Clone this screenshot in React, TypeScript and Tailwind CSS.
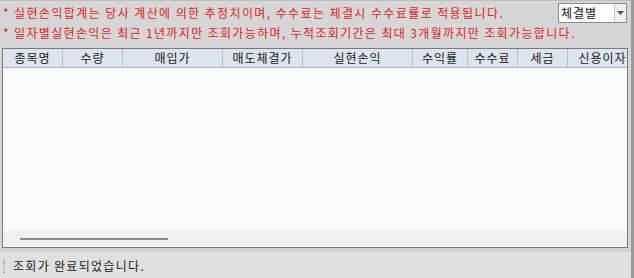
import React from "react";

const cols: { label: string; w: number }[] = [
  { label: "종목명", w: 60 },
  { label: "수량", w: 60 },
  { label: "매입가", w: 100 },
  { label: "매도체결가", w: 80 },
  { label: "실현손익", w: 110 },
  { label: "수익률", w: 55 },
  { label: "수수료", w: 50 },
  { label: "세금", w: 50 },
  { label: "신용이자", w: 70 },
];

export default function App() {
  return (
    <div
      className="w-[634px] h-[278px] flex bg-[#d6d6d6] overflow-hidden text-[12px]"
      style={{ fontFamily: '"Noto Sans CJK KR", "Noto Sans", sans-serif' }}
    >
      <div className="flex-1 flex flex-col min-w-0">
        <div className="h-[1px] bg-[#bdbdbd]" />
        <div className="flex pl-[3px] pr-[4px]">
          <div className="flex-1 min-w-0 flex flex-col text-[#e2231a] pt-[2px] tracking-[1.4px]">
            <div className="h-[20px] leading-[20px] whitespace-nowrap">
              * 실현손익합계는 당사 계산에 의한 추정치이며, 수수료는 체결시 수수료률로 적용됩니다.
            </div>
            <div className="h-[19px] leading-[19px] whitespace-nowrap tracking-[1.35px]">
              * 일자별실현손익은 최근 1년까지만 조회가능하며, 누적조회기간은 최대 3개월까지만 조회가능합니다.
            </div>
          </div>
          <div className="shrink-0 mt-[2px] w-[69px] h-[20px] flex border border-[#8a8a8a] bg-white">
            <div className="flex-1 pl-[2px] leading-[18px] text-[#111] tracking-[1px] whitespace-nowrap">체결별</div>
            <div className="w-[12px] bg-[#f0f0f0] border-l border-[#c8c8c8] flex items-center justify-center">
              <svg width="7" height="4" viewBox="0 0 7 4">
                <path d="M0 0 H7 L3.5 4 Z" fill="#555" />
              </svg>
            </div>
          </div>
        </div>
        <div className="mt-[6px] ml-[2px] mr-[3px] h-[200px] border border-[#7a7a7a] flex flex-col bg-[#fafcff] overflow-hidden">
          <div className="h-[19px] flex bg-[#dce4ee] border-b border-[#a9b1bb] shrink-0">
            {cols.map((c, i) => (
              <div
                key={i}
                className="h-full flex items-center justify-center text-[#1a1a1a] border-r border-[#b7bec8] shrink-0 whitespace-nowrap tracking-[1px]"
                style={{ width: c.w }}
              >
                {c.label}
              </div>
            ))}
          </div>
          <div className="flex-1" />
          <div className="h-[16px] bg-[#f0f0f0] flex items-center pl-[17px] shrink-0">
            <div className="w-[148px] h-[2px] bg-[#8c8c8c]" />
          </div>
        </div>
        <div className="mt-[1px] h-[1px] bg-[#cbcbcb]" />
        <div className="mt-[3px] flex-1 bg-[#e0e0e0] border-t border-[#ececec] flex items-center">
          <div className="ml-[3px] w-[2px] h-[14px] flex flex-col justify-between">
            {Array.from({ length: 7 }).map((_, i) => (
              <div key={i} className="w-[2px] h-[1px] bg-[#aaaaaa]" />
            ))}
          </div>
          <div className="ml-[8px] text-[#222] tracking-[1.3px]">조회가 완료되었습니다.</div>
        </div>
      </div>
      <div className="w-[3px] bg-[#9a9a9a]" />
    </div>
  );
}
